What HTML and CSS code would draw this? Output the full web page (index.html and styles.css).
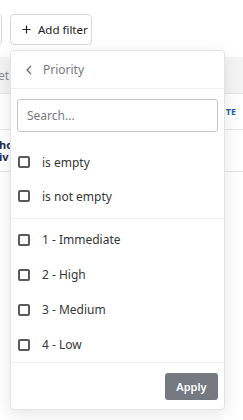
FILE: index.html
```html
<!DOCTYPE html>
<html lang="en">
<head>
<meta charset="utf-8">
<link rel="stylesheet" href="styles.css">
</head>
<body>
<div class="page">
  <div class="toolbar">
    <button class="btn btn-stub"></button>
    <button class="btn btn-add">
      <svg class="plus" width="9" height="9" viewBox="0 0 9 9"><path d="M4.5 0.5v8M0.5 4.5h8" stroke="#222" stroke-width="1.2" fill="none"/></svg>
      <span>Add filter</span>
    </button>
  </div>
  <div class="table">
    <div class="thead"><span class="th-text">et</span></div>
    <div class="row row-a"><span class="link">TE</span></div>
    <div class="row row-b"><span class="strong">ho<br>iv</span></div>
  </div>

  <div class="dropdown">
    <div class="dd-header">
      <svg class="chev" width="6" height="10" viewBox="0 0 6 10"><path d="M5 1L1 5l4 4" stroke="#666" stroke-width="1.2" fill="none"/></svg>
      <span class="dd-title">Priority</span>
    </div>
    <div class="dd-search">
      <input class="search" type="text" placeholder="Search...">
    </div>
    <div class="group group-1">
      <label class="opt"><span class="box"></span><span>is empty</span></label>
      <label class="opt"><span class="box"></span><span>is not empty</span></label>
    </div>
    <div class="group group-2">
      <label class="opt opt-l"><span class="box"></span><span>1 - Immediate</span></label>
      <label class="opt opt-l"><span class="box"></span><span>2 - High</span></label>
      <label class="opt opt-l"><span class="box"></span><span>3 - Medium</span></label>
      <label class="opt opt-l"><span class="box"></span><span>4 - Low</span></label>
    </div>
    <div class="dd-footer">
      <button class="apply">Apply</button>
    </div>
  </div>
</div>
</body>
</html>
```

FILE: styles.css
```css
* { box-sizing: border-box; }
html, body { margin: 0; padding: 0; background: #fff; }
body {
  font-family: "Noto Sans", "Open Sans", sans-serif;
  width: 243px;
  height: 420px;
  overflow: hidden;
}
.page { position: relative; width: 243px; height: 420px; overflow: hidden; }

.toolbar {
  display: flex;
  gap: 8px;
  padding-top: 14px;
  height: 57px;
}
.btn {
  height: 31px;
  border: 1px solid #d8d8d8;
  border-radius: 4px;
  background: #fff;
  font-family: inherit;
  padding: 0;
}
.btn-stub { width: 30px; margin-left: -28px; }
.btn-add {
  width: 82px;
  display: flex;
  align-items: center;
  gap: 7px;
  padding-left: 11px;
  font-size: 11.5px;
  color: #222;
}
.plus { flex: none; }

.table { width: 243px; }
.thead {
  height: 37px;
  background: #f4f4f4;
  border-bottom: 1px solid #e4e4e4;
  display: flex;
  align-items: center;
  font-size: 12px;
  color: #8a8a8a;
}
.th-text { margin-left: -2px; }
.row { border-bottom: 1px solid #e4e4e4; display: flex; align-items: center; }
.row-a { height: 36px; justify-content: flex-end; padding-right: 7px; }
.link { color: #1f5fa6; font-weight: 700; font-size: 9px; }
.row-b { height: 42px; }
.strong { color: #1c2a44; font-weight: 700; font-size: 11px; line-height: 12px; margin-left: -1px; }

.dropdown {
  position: absolute;
  left: 10px;
  top: 50px;
  width: 215px;
  height: 360px;
  background: #fff;
  border: 1px solid #e3e3e3;
  border-radius: 4px;
  box-shadow: 0 4px 16px rgba(0, 0, 0, 0.10);
  display: flex;
  flex-direction: column;
}
.dd-header {
  height: 38px;
  border-bottom: 1px solid #efefef;
  display: flex;
  align-items: center;
  padding-left: 15px;
  gap: 11px;
  flex: none;
}
.dd-title { font-size: 12px; color: #777; }
.dd-search { padding: 10px 6px 0 6px; flex: none; }
.search {
  display: block;
  width: 201px;
  height: 33px;
  border: 1px solid #c6c6c6;
  border-radius: 3px;
  padding: 0 9px;
  font-family: inherit;
  font-size: 12px;
  color: #333;
  outline: none;
}
.search::placeholder { color: #7a7a7a; }

.group { display: flex; flex-direction: column; flex: none; }
.group-1 { padding: 13px 0 5px; border-bottom: 1px solid #efefef; }
.group-2 { padding-top: 3px; border-bottom: 1px solid #efefef; }
.opt {
  height: 34px;
  display: flex;
  align-items: center;
  gap: 12px;
  padding-left: 7px;
  font-size: 12px;
  color: #363636;
}
.opt-l { height: 35px; }
.box {
  width: 12px;
  height: 12px;
  border: 2px solid #5a5a5a;
  border-radius: 2px;
  flex: none;
}

.dd-footer {
  flex: 1;
  display: flex;
  justify-content: flex-end;
  align-items: flex-start;
  padding: 10px 6px 0;
}
.apply {
  width: 53px;
  height: 27px;
  background: #747982;
  color: #fff;
  border: none;
  border-radius: 3px;
  font-family: inherit;
  font-size: 11px;
  font-weight: 600;
  padding: 0;
}
```
